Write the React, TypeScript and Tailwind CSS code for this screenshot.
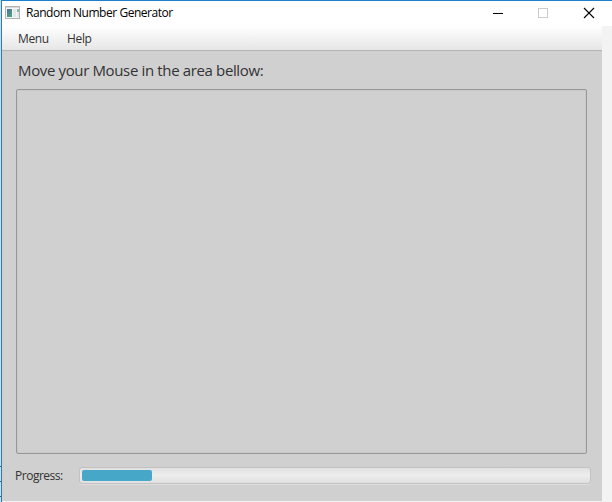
import React from "react";

function AppIcon() {
  return (
    <svg width="16" height="14" viewBox="0 0 16 14">
      <defs>
        <linearGradient id="pane" x1="0" y1="0" x2="0.6" y2="1">
          <stop offset="0" stopColor="#4b6f9c" />
          <stop offset="1" stopColor="#4f9f83" />
        </linearGradient>
      </defs>
      <g shapeRendering="crispEdges">
        <rect x="0" y="0" width="15" height="13" fill="#b0b3b5" />
        <rect x="1" y="1" width="13" height="1" fill="#d6d8da" />
        <rect x="1" y="2" width="13" height="10" fill="#f4f5f6" />
        <rect x="2" y="3" width="5" height="8" fill="url(#pane)" />
        <rect x="8" y="3" width="3" height="8" fill="#e3e7e9" />
        <rect x="12" y="3" width="2" height="3" fill="#8fb9a8" />
        <rect x="12" y="6" width="2" height="5" fill="#e0e8e6" />
      </g>
    </svg>
  );
}

function TitleBar() {
  return (
    <header className="flex h-[25px] shrink-0 items-start bg-white pl-[3px] text-black">
      <div className="mt-[5px] w-[21px]"><AppIcon /></div>
      <h1 className="mt-[4px] text-[12px] leading-[16px] tracking-[-0.46px] whitespace-nowrap">Random Number Generator</h1>
      <svg className="mt-[6px] mr-[17px] ml-auto" width="102" height="12" viewBox="0 0 102 12" fill="none">
        <path d="M0 6.5H10" stroke="#000" />
        <rect x="45.5" y="1.5" width="9" height="9" stroke="#ccc" />
        <path d="M91 1L101 11M101 1L91 11" stroke="#000" strokeWidth="1.1" />
      </svg>
    </header>
  );
}

export default function App() {
  return (
    <div className="flex h-[502px] w-[612px] overflow-hidden bg-[#f3f3f3] font-['Open_Sans','Noto_Sans',sans-serif] text-[#333]">
      <div className="flex w-px shrink-0 flex-col bg-[#d9d9d9] pt-[466px]">
        <i className="h-px bg-[#555]" />
        <i className="mt-[14px] h-px bg-[#555]" />
        <i className="mt-[14px] h-px bg-[#555]" />
      </div>
      <div className="flex min-w-0 flex-1 flex-col border-t border-l border-[#1c7fd0]">
        <TitleBar />
        <div className="flex h-[475px] w-[600px] shrink-0 flex-col bg-[#d0d0d0]">
          <nav className="flex h-[25px] shrink-0 border-b border-[#b5b5b5] bg-linear-to-b from-white to-[#e6e6e6] pt-[4px] pl-[16px] text-[12px] leading-[18px] tracking-[-0.35px]">
            <span className="w-[49px]">Menu</span>
            <span>Help</span>
          </nav>
          <p className="mt-[8px] ml-[16px] h-[22px] text-[15px] leading-[22px] tracking-[-0.36px] whitespace-nowrap">Move your Mouse in the area bellow:</p>
          <div className="mt-[8px] ml-[14px] h-[365px] w-[571px] shrink-0 rounded-[2px] border border-[#989898] shadow-[inset_0_0_0_1px_#c9c9c9]" />
          <div className="mt-[12px] flex h-[20px] pl-[13px]">
            <span className="w-[64px] text-[12px] leading-[20px] tracking-[-0.48px]">Progress:</span>
            <div className="mt-[1px] h-[17px] w-[512px] rounded-[3px] border border-[#c2c2c2] bg-linear-to-b from-[#e1e1e1] via-[#ededed] to-[#dfdfdf] p-[2px] shadow-[0_1px_0_#dedede]">
              <div className="h-[11px] w-[70px] rounded-[2px] bg-[#46a7c8]" />
            </div>
          </div>
        </div>
      </div>
    </div>
  );
}
